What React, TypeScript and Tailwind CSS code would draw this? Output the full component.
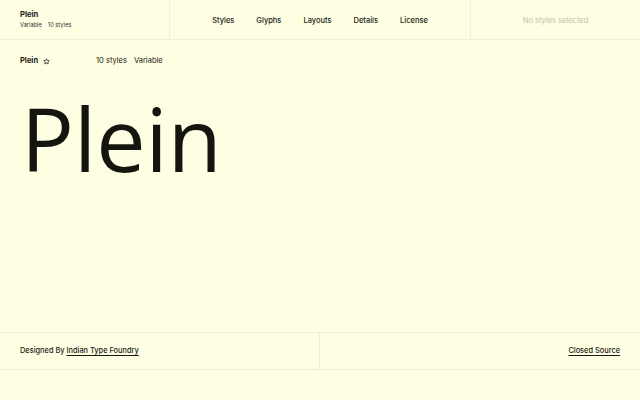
import React from "react";

const navItems = ["Styles", "Glyphs", "Layouts", "Details", "License"];

export default function App() {
  return (
    <div
      className="flex h-[400px] w-[640px] flex-col bg-[#fefee3] text-[#1a1a14]"
      style={{ fontFamily: "Inter, 'Liberation Sans', sans-serif" }}
    >
      {/* header */}
      <header className="flex h-10 border-b border-[#efefd6]">
        <div className="flex w-[170px] flex-col justify-center border-r border-[#efefd6] pl-5">
          <span className="text-[7.6px] font-bold leading-none">Plein</span>
          <span className="mt-[3px] flex gap-[6px] text-[5.7px] leading-none text-[#333]">
            <span>Variable</span>
            <span>10 styles</span>
          </span>
        </div>
        <nav className="flex w-[300px] items-center justify-center gap-[22px] pt-[2px] text-[7.5px] font-medium">
          {navItems.map((item) => (
            <span key={item}>{item}</span>
          ))}
        </nav>
        <div className="flex flex-1 items-center justify-center border-l border-[#efefd6] pt-[2px] text-[7.5px] text-[#c2c2ae]">
          No styles selected
        </div>
      </header>

      {/* meta row */}
      <div className="flex h-10 items-center pl-5 pt-[2px] text-[7.5px]">
        <span className="font-bold">Plein</span>
        <svg className="ml-[5px]" width="7" height="7" viewBox="0 0 24 24" fill="none" stroke="currentColor" strokeWidth="2.4" strokeLinejoin="round">
          <path d="M12 2.5l2.9 6.1 6.6.8-4.9 4.6 1.3 6.6L12 17.3l-5.9 3.3 1.3-6.6-4.9-4.6 6.6-.8z" />
        </svg>
        <span className="ml-[46px]">10 styles</span>
        <span className="ml-[7px]">Variable</span>
      </div>

      {/* specimen */}
      <div className="flex-1 pl-[21px] pt-[14px]">
        <div
          className="text-[88px] leading-none text-[#15150f]"
          style={{ fontFamily: "'Open Sans', 'Noto Sans', sans-serif" }}
        >
          Plein
        </div>
      </div>

      {/* footer */}
      <footer className="flex h-[38px] border-y border-[#efefd6] text-[7.4px] font-medium">
        <div className="flex w-[320px] items-center border-r border-[#efefd6] pl-5">
          Designed By&nbsp;<span className="underline underline-offset-2">Indian Type Foundry</span>
        </div>
        <div className="flex flex-1 items-center justify-end pr-5">
          <span className="underline underline-offset-2">Closed Source</span>
        </div>
      </footer>
      <div className="h-[30px]" />
    </div>
  );
}
